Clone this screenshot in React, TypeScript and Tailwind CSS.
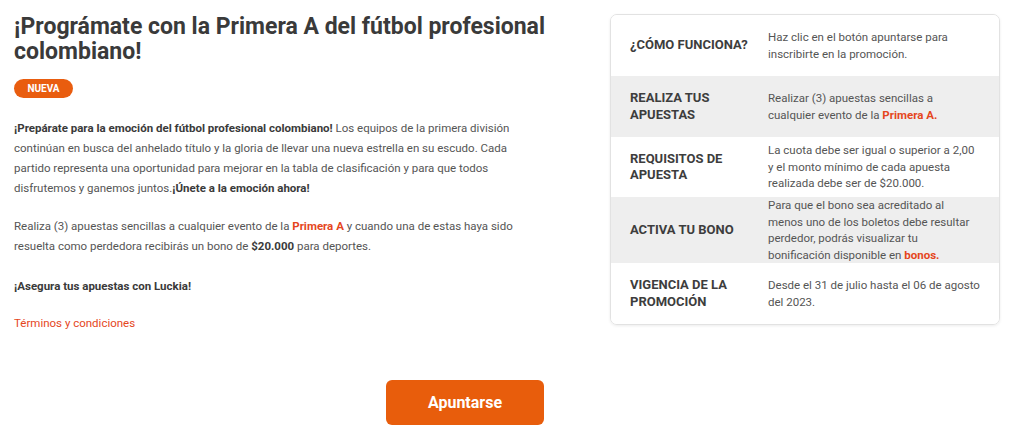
import React from 'react';

const rows = [
  {
    label: '¿CÓMO FUNCIONA?',
    text: <>Haz clic en el botón apuntarse para inscribirte en la promoción.</>,
    gray: false,
    h: 'h-[61px]',
  },
  {
    label: 'REALIZA TUS APUESTAS',
    text: (
      <>
        Realizar (3) apuestas sencillas a cualquier evento de la{' '}
        <b className="font-bold text-[#e5461d]">Primera A.</b>
      </>
    ),
    gray: true,
    h: 'h-[61px]',
  },
  {
    label: 'REQUISITOS DE APUESTA',
    text: <>La cuota debe ser igual o superior a 2,00 y el monto mínimo de cada apuesta realizada debe ser de $20.000.</>,
    gray: false,
    h: 'h-[60px]',
  },
  {
    label: 'ACTIVA TU BONO',
    text: (
      <>
        Para que el bono sea acreditado al
        <br />
        menos uno de los boletos debe resultar perdedor, podrás visualizar tu bonificación disponible en{' '}
        <b className="font-bold text-[#e5461d]">bonos.</b>
      </>
    ),
    gray: true,
    h: 'h-[66px]',
  },
  {
    label: 'VIGENCIA DE LA PROMOCIÓN',
    text: <>Desde el 31 de julio hasta el 06 de agosto del 2023.</>,
    gray: false,
    h: 'h-[61px]',
  },
];

const App: React.FC = () => {
  return (
    <div className="w-[1024px] h-[433px] bg-white overflow-hidden font-['Roboto','Liberation_Sans',sans-serif]">
      <div className="flex px-[14px] pt-[14px]">
        <div className="w-[532px]">
          <h1 className="w-[540px] text-[23px] leading-[25px] font-bold text-[#3a3a3a]">
            ¡Prográmate con la Primera A del fútbol profesional colombiano!
          </h1>
          <span className="mt-[15px] inline-flex items-center justify-center w-[59px] h-[19px] rounded-full bg-[#e95d0f] text-white text-[10px] font-bold">
            NUEVA
          </span>

          <div className="mt-[19px] w-[520px] text-[11.5px] leading-[20px] text-[#555555]">
            <p>
              <b className="font-bold text-[#3a3a3a]">¡Prepárate para la emoción del fútbol profesional colombiano!</b>{' '}
              Los equipos de la primera división continúan en busca del anhelado título y la gloria de llevar una nueva
              estrella en su escudo. Cada partido representa una oportunidad para mejorar en la tabla de clasificación y
              para que todos disfrutemos y ganemos juntos.
              <b className="font-bold text-[#3a3a3a]">¡Únete a la emoción ahora!</b>
            </p>
            <p className="mt-[18px]">
              Realiza (3) apuestas sencillas a cualquier evento de la{' '}
              <b className="font-bold text-[#e5461d]">Primera A</b> y cuando una de estas haya sido resuelta como
              perdedora recibirás un bono de <b className="font-bold text-[#3a3a3a]">$20.000</b> para deportes.
            </p>
            <p className="mt-[20px] font-bold text-[#3a3a3a]">¡Asegura tus apuestas con Luckia!</p>
            <p className="mt-[17px]">
              <a className="text-[#e5461d]">Términos y condiciones</a>
            </p>
          </div>
        </div>

        <div className="ml-[64px] w-[390px] self-start rounded-[7px] border border-[#e2e2e2] shadow-[0_1px_3px_rgba(0,0,0,0.08)] overflow-hidden">
          {rows.map((r, i) => (
            <div key={i} className={`flex items-center pl-[19px] ${r.h} ${r.gray ? 'bg-[#eeeeee]' : 'bg-white'}`}>
              <div className="w-[138px] shrink-0 pr-3 text-[13px] leading-[16.5px] font-bold text-[#3d3d3d]">
                {r.label}
              </div>
              <div className="w-[214px] text-[11.5px] leading-[16.5px] text-[#555555]">{r.text}</div>
            </div>
          ))}
        </div>
      </div>

      <div className="pl-[386px] mt-[47px]">
        <button className="w-[158px] h-[45px] rounded-[6px] bg-[#e85d0c] text-white text-[16px] font-bold">
          Apuntarse
        </button>
      </div>
    </div>
  );
};

export default App;
